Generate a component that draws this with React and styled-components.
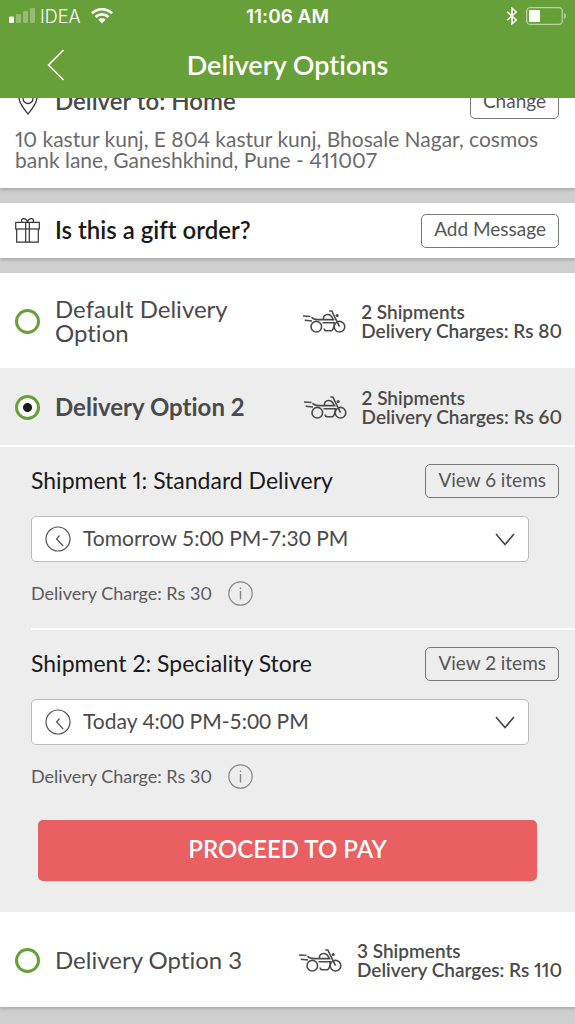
import React, { useState } from "react";
import styled, { createGlobalStyle } from "styled-components";

const GlobalStyle = createGlobalStyle`
  * {
    box-sizing: border-box;
  }
  body {
    margin: 0;
    background: #cfcfcf;
    color: #4a4a4a;
    font-family: Lato, "Open Sans", sans-serif;
    font-variant-ligatures: none;
    font-variant-numeric: proportional-nums;
  }
  button, select, input {
    font-family: inherit;
    font-variant-ligatures: inherit;
    font-variant-numeric: inherit;
    margin: 0;
  }
`;

const Page = styled.div`
  min-height: 100vh;
  background: #cfcfcf;
`;
const Header = styled.header`
  position: sticky;
  top: 0;
  z-index: 1;
  background: #679f38;
  color: #fff;
`;
const StatusBar = styled.div`
  display: grid;
  grid-template-columns: 1fr auto 1fr;
  align-items: center;
  height: 32px;
  padding: 0 8px;
  font-family: Inter, Roboto, sans-serif;
  font-size: 18px;
`;
const Carrier = styled.div`
  display: flex;
  align-items: center;
  gap: 5px;
  font-weight: 300;
`;
const Time = styled.span`
  font-size: 19px;
  font-weight: 600;
`;
const StatusIcons = styled.div`
  display: flex;
  align-items: center;
  justify-content: flex-end;
  gap: 8px;
`;
const NavBar = styled.div`
  display: grid;
  grid-template-columns: 48px 1fr 48px;
  align-items: center;
  height: 66px;
  padding: 0 32px;
`;
const BackButton = styled.button`
  display: flex;
  justify-content: center;
  height: 48px;
  align-items: center;
  background: none;
  border: none;
  padding: 0;
  color: inherit;
  cursor: pointer;
`;
const Title = styled.h1`
  margin: 0;
  padding-bottom: 2px;
  text-align: center;
  font-size: 27px;
  font-weight: 600;
`;

/* The list is scrolled a little way under the sticky header */
const Content = styled.main`
  margin-top: -27px;
  display: flex;
  flex-direction: column;
  gap: 15px;
`;
const Card = styled.section`
  background: #fff;
  box-shadow: 0 2px 3px rgba(0, 0, 0, 0.18);
`;
const AddressCard = styled(Card)`
  padding: 14px 16px 18px 15px;
`;
const CardRow = styled.div`
  display: flex;
  align-items: center;
`;
const GiftCard = styled(Card)`
  display: flex;
  align-items: center;
  height: 55px;
  padding: 0 16px 0 15px;
`;
const IconSlot = styled.span`
  display: flex;
  justify-content: center;
  width: 25px;
  margin-right: 15px;
`;
const CardTitle = styled.h2`
  flex: 1;
  margin: 0;
  padding-bottom: 3px;
  font-size: 24px;
  font-weight: 600;
  color: ${p => (p.$dark ? "#1a1a1a" : "#4a4a4a")};
`;
const Address = styled.p`
  margin: 9px 0 0;
  font-size: 21px;
  line-height: 21px;
  color: #6b6b6b;
`;
const OutlineButton = styled.button`
  height: 34px;
  padding: 0 12px 3px;
  background: transparent;
  border: 1px solid #777;
  border-radius: 5px;
  color: #555;
  font-size: 19px;
  line-height: 24px;
  white-space: nowrap;
  cursor: pointer;
`;

const Option = styled.div`
  display: flex;
  align-items: center;
  min-height: ${p => (p.$selected ? "77px" : "95px")};
  padding: 2px 13px 0 15px;
  background: ${p => (p.$selected ? "#ededed" : "#fff")};
`;
const Radio = styled.input`
  appearance: none;
  flex: none;
  width: 25px;
  height: 25px;
  border: 3px solid #679f38;
  border-radius: 50%;
  background: #fff;
  cursor: pointer;
  &:checked {
    background: radial-gradient(circle, #1a1a1a 4px, #fff 5px);
  }
`;
const OptionName = styled.label`
  flex: 1;
  padding: 0 40px 2px 15px;
  font-size: 24px;
  line-height: 24px;
  font-weight: ${p => (p.$selected ? 700 : 400)};
  cursor: pointer;
`;
const Charges = styled.div`
  margin-left: 15px;
  padding-bottom: 2px;
  font-size: 19px;
  line-height: 19px;
  font-weight: 600;
  white-space: nowrap;
`;
const Details = styled.div`
  padding-bottom: 31px;
  background: #ededed;
  border-top: 2px solid #fff;
`;
const Shipment = styled.div`
  margin-left: 31px;
  padding: 17px 0 22px;
  & + & {
    border-top: 2px solid #fff;
  }
`;
const ShipmentHead = styled.div`
  display: flex;
  align-items: center;
  justify-content: space-between;
  padding-right: 16px;
`;
const ShipmentName = styled.h3`
  margin: 0;
  padding-bottom: 3px;
  font-size: 23px;
  font-weight: 400;
  color: #1a1a1a;
`;
const SlotBox = styled.div`
  position: relative;
  margin: 18px 46px 0 0;
  color: #4a4a4a;
`;
const Slot = styled.select`
  appearance: none;
  display: block;
  width: 100%;
  height: 46px;
  padding: 0 48px 3px 51px;
  background: #fff;
  border: 1px solid #bbb;
  border-radius: 5px;
  color: inherit;
  font-size: 21px;
  font-variant-numeric: tabular-nums;
`;
const SlotIcon = styled.span`
  position: absolute;
  top: 0;
  bottom: 0;
  ${p => p.$side}: 14px;
  display: flex;
  align-items: center;
  pointer-events: none;
`;
const ChargeRow = styled.div`
  display: flex;
  align-items: center;
  gap: 16px;
  margin-top: 19px;
  font-size: 18px;
  color: #5a5a5a;
`;
const ChargeText = styled.span`
  padding-bottom: 2px;
`;
const InfoButton = styled.button`
  display: flex;
  padding: 0;
  background: none;
  border: none;
  color: #858585;
  cursor: pointer;
`;
const PayButton = styled.button`
  display: block;
  width: calc(100% - 76px);
  height: 61px;
  margin: 9px auto 0;
  padding: 0 0 4px;
  background: #ea5f62;
  border: none;
  border-radius: 5px;
  color: #fff;
  font-size: 24px;
  font-weight: 600;
  cursor: pointer;
`;

const SignalIcon = () => (
  <svg width="27" height="16" viewBox="0 0 27 16" fill="#fff">
    <rect x="1" y="8.5" width="5" height="6.5" rx="1.2" />
    <rect x="8" y="6" width="5" height="9" rx="1.2" opacity="0.3" />
    <rect x="15" y="3" width="5" height="12" rx="1.2" opacity="0.3" />
    <rect x="22" y="0" width="5" height="15" rx="1.2" opacity="0.3" />
  </svg>
);

const WifiIcon = () => (
  <svg width="32" height="16" viewBox="-5 0 32 16" fill="none" stroke="#fff" strokeWidth="2.8">
    <path d="M1 5.3a14.3 14.3 0 0 1 20 0" />
    <path d="M4.6 9a9.2 9.2 0 0 1 12.8 0" />
    <path d="M7.3 11.6a5.4 5.4 0 0 1 7.4 0L11 15.4z" fill="#fff" stroke="none" />
  </svg>
);

const BluetoothIcon = () => (
  <svg width="12" height="18" viewBox="0 0 12 18" fill="none" stroke="#fff" strokeWidth="1.5">
    <path d="M1.2 4.8l9 8.2L6 16.8V1.2L10.2 5l-9 8.2" />
  </svg>
);

const BatteryIcon = () => (
  <svg width="41" height="18" viewBox="0 0 41 18" fill="none">
    <rect x="0.7" y="0.7" width="35.6" height="16.6" rx="3.5" stroke="#b9d3a0" strokeWidth="1.3" />
    <rect x="3" y="3" width="11" height="12" rx="1" fill="#fff" />
    <path d="M38 6c2.5 1 2.5 5 0 6z" fill="#b9d3a0" />
  </svg>
);

const BackIcon = () => (
  <svg width="18" height="32" viewBox="0 0 18 32" fill="none" stroke="currentColor" strokeWidth="1.6">
    <path d="M16.5 1L1.5 16l15 15" />
  </svg>
);

const PinIcon = () => (
  <svg width="22" height="32" viewBox="0 0 22 32" fill="none" stroke="#333" strokeWidth="1.3">
    <path d="M11 28C7.5 23 2 18 2 11.5a9 9 0 0 1 18 0C20 18 14.5 23 11 28z" />
    <circle cx="11" cy="12.5" r="5" />
  </svg>
);

const GiftIcon = () => (
  <svg width="25" height="26" viewBox="0 0 25 26" fill="none" stroke="#333" strokeWidth="1.2">
    <rect x="0.7" y="4.4" width="23.6" height="6.6" />
    <path d="M1.7 11v13.2h21.6V11M10.7 4.4v19.8M14.3 4.4v19.8" />
    <path d="M7.3 4.4C5.5 2.3 6.8 .7 8.7 .7c2 0 3.2 1.3 3.8 3.7.6-2.4 1.8-3.7 3.8-3.7 1.9 0 3.2 1.6 1.4 3.7" />
  </svg>
);

const BikeIcon = () => (
  <svg width="43" height="26" viewBox="0 0 43 26" fill="none" stroke="#4a4a4a" strokeWidth="1.6">
    <path d="M0 7l7.5.5M1.7 11.3l7.3.7" />
    <circle cx="13.3" cy="17.7" r="5.3" />
    <circle cx="36.5" cy="17.7" r="5.3" />
    <path d="M8.5 8.2c2 2.2 4 2.4 6.5 2.4h16.5" />
    <path d="M20.5 10.3c-.6-3 1.5-4.8 4-4.8 2.8 0 4.3 1.5 5.5 4.5" />
    <path d="M26.3 2h2.500l7.7 15.7" />
    <circle cx="34.2" cy="6.4" r="1.5" fill="#4a4a4a" stroke="none" />
    <path d="M19.5 13.8h11.8c0 4-1 6.8-2.8 8h-5c-1.6 0-2.3-1.2-2.3-2.3" />
  </svg>
);

const ClockIcon = () => (
  <svg width="26" height="26" viewBox="0 0 26 26" fill="none" stroke="#555" strokeWidth="1.2">
    <circle cx="13" cy="13" r="12" />
    <path d="M14.5 9.5L11.5 13l6.7 7" />
  </svg>
);

const ChevronIcon = () => (
  <svg width="20" height="13" viewBox="0 0 20 13" fill="none" stroke="#444" strokeWidth="1.6">
    <path d="M1 1l9 10.5L19 1" />
  </svg>
);

const InfoIcon = () => (
  <svg width="25" height="25" viewBox="0 0 25 25" fill="none" stroke="currentColor" strokeWidth="1.2">
    <circle cx="12.5" cy="12.5" r="11.7" />
    <path d="M12.5 10v8.5M12.5 6.5V8" strokeWidth="1.4" />
  </svg>
);

const options = [
  { id: "default", name: "Default Delivery Option", shipments: 2, charge: 80 },
  {
    id: "option2",
    name: "Delivery Option 2",
    shipments: 2,
    charge: 60,
    details: [
      { name: "Shipment 1: Standard Delivery", items: 6, slot: "Tomorrow 5:00 PM-7:30 PM", charge: 30 },
      { name: "Shipment 2: Speciality Store", items: 2, slot: "Today 4:00 PM-5:00 PM", charge: 30 },
    ],
  },
  { id: "option3", name: "Delivery Option 3", shipments: 3, charge: 110 },
];

function ShipmentDetails({ shipment }) {
  return (
    <Shipment>
      <ShipmentHead>
        <ShipmentName>{shipment.name}</ShipmentName>
        <OutlineButton type="button">{`View ${shipment.items} items`}</OutlineButton>
      </ShipmentHead>
      <SlotBox>
        <SlotIcon $side="left"><ClockIcon /></SlotIcon>
        <Slot aria-label={shipment.name}>
          <option>{shipment.slot}</option>
        </Slot>
        <SlotIcon $side="right"><ChevronIcon /></SlotIcon>
      </SlotBox>
      <ChargeRow>
        <ChargeText>{`Delivery Charge: Rs ${shipment.charge}`}</ChargeText>
        <InfoButton type="button" aria-label="Delivery charge info"><InfoIcon /></InfoButton>
      </ChargeRow>
    </Shipment>
  );
}

export default function App() {
  const [selected, setSelected] = useState("option2");

  return (
    <Page>
      <GlobalStyle />
      <Header>
        <StatusBar>
          <Carrier>
            <SignalIcon />
            <span>IDEA</span>
            <WifiIcon />
          </Carrier>
          <Time>11:06 AM</Time>
          <StatusIcons>
            <BluetoothIcon />
            <BatteryIcon />
          </StatusIcons>
        </StatusBar>
        <NavBar>
          <BackButton type="button" aria-label="Back"><BackIcon /></BackButton>
          <Title>Delivery Options</Title>
        </NavBar>
      </Header>

      <Content>
        <AddressCard>
          <CardRow>
            <IconSlot><PinIcon /></IconSlot>
            <CardTitle>Deliver to: Home</CardTitle>
            <OutlineButton type="button">Change</OutlineButton>
          </CardRow>
          <Address>
            10 kastur kunj, E 804 kastur kunj, Bhosale Nagar, cosmos bank lane, Ganeshkhind, Pune - 411007
          </Address>
        </AddressCard>

        <GiftCard>
          <IconSlot><GiftIcon /></IconSlot>
          <CardTitle $dark>Is this a gift order?</CardTitle>
          <OutlineButton type="button">Add Message</OutlineButton>
        </GiftCard>

        <Card>
          {options.map(option => {
            const isSelected = option.id === selected;
            return (
              <React.Fragment key={option.id}>
                <Option $selected={isSelected}>
                  <Radio
                    type="radio"
                    name="delivery"
                    id={option.id}
                    checked={isSelected}
                    onChange={() => setSelected(option.id)}
                  />
                  <OptionName htmlFor={option.id} $selected={isSelected}>{option.name}</OptionName>
                  <BikeIcon />
                  <Charges>
                    <div>{`${option.shipments} Shipments`}</div>
                    <div>{`Delivery Charges: Rs ${option.charge}`}</div>
                  </Charges>
                </Option>
                {isSelected && option.details && (
                  <Details>
                    {option.details.map(shipment => (
                      <ShipmentDetails key={shipment.name} shipment={shipment} />
                    ))}
                    <PayButton type="button">PROCEED TO PAY</PayButton>
                  </Details>
                )}
              </React.Fragment>
            );
          })}
        </Card>
      </Content>
    </Page>
  );
}
